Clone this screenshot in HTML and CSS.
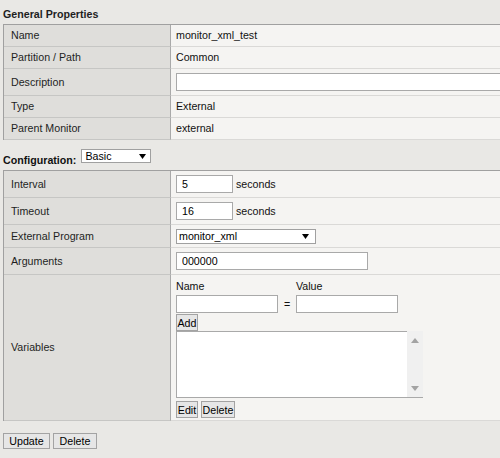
FILE: index.html
```html
<!DOCTYPE html>
<html>
<head>
<meta charset="utf-8">
<link rel="stylesheet" href="styles.css">
</head>
<body>
<div class="page">
  <div class="section-title">General Properties</div>
  <div class="props general">
    <div class="label">Name</div><div class="value">monitor_xml_test</div>
    <div class="label">Partition / Path</div><div class="value">Common</div>
    <div class="label">Description</div><div class="value"><input class="field w-desc" type="text"></div>
    <div class="label">Type</div><div class="value">External</div>
    <div class="label">Parent Monitor</div><div class="value">external</div>
  </div>

  <div class="config-bar">
    <span class="config-label">Configuration:</span>
    <span class="select select-basic"><span>Basic</span><svg class="arrow" width="7" height="5" viewBox="0 0 7 5"><path d="M0 0H7L3.5 5Z" fill="#000"/></svg></span>
  </div>

  <div class="props config">
    <div class="label">Interval</div>
    <div class="value"><input class="field w-num" type="text" value="5"><span class="unit">seconds</span></div>
    <div class="label">Timeout</div>
    <div class="value"><input class="field w-num" type="text" value="16"><span class="unit">seconds</span></div>
    <div class="label">External Program</div>
    <div class="value"><span class="select select-prog"><span>monitor_xml</span><svg class="arrow" width="7" height="5" viewBox="0 0 7 5"><path d="M0 0H7L3.5 5Z" fill="#000"/></svg></span></div>
    <div class="label">Arguments</div>
    <div class="value"><input class="field w-args" type="text" value="000000"></div>
    <div class="label">Variables</div>
    <div class="value vars">
      <div class="var-row">
        <div class="var-field"><div class="var-label">Name</div><input class="field w-var" type="text"></div>
        <span class="eq">=</span>
        <div class="var-field"><div class="var-label">Value</div><input class="field w-var" type="text"></div>
      </div>
      <button class="btn btn-add">Add</button>
      <div class="listbox">
        <div class="list-area"></div>
        <div class="scrollbar">
          <svg width="8" height="5" viewBox="0 0 8 5"><path d="M0 5L4 0L8 5Z" fill="#a3a3a3"/></svg>
          <svg width="8" height="5" viewBox="0 0 8 5"><path d="M0 0H8L4 5Z" fill="#a3a3a3"/></svg>
        </div>
      </div>
      <div class="btn-row">
        <button class="btn btn-edit">Edit</button>
        <button class="btn btn-del-small">Delete</button>
      </div>
    </div>
  </div>

  <div class="actions">
    <button class="btn btn-update">Update</button>
    <button class="btn btn-delete">Delete</button>
  </div>
</div>
</body>
</html>
```

FILE: styles.css
```css
html, body {
  margin: 0;
  padding: 0;
  width: 500px;
  height: 458px;
  overflow: hidden;
  background: #e9e8e5;
}

body {
  font-family: "Liberation Sans", Arial, sans-serif;
  font-size: 8pt;
  line-height: 13px;
  color: #1e1e1e;
}

.page {
  padding-left: 3px;
}

.section-title {
  font-weight: bold;
  box-sizing: border-box;
  height: 24px;
  padding-top: 8px;
}

.props {
  width: 497px;
  display: grid;
  grid-template-columns: 167px minmax(0, 1fr);
  border-top: 1px solid #a0a0a0;
  border-left: 1px solid #a0a0a0;
  box-sizing: border-box;
}

.general {
  grid-template-rows: 22px 22px 27px 22px 22px;
}

.config {
  grid-template-rows: 27px 27px 23px 27px 146px;
}

.label {
  box-sizing: border-box;
  background: #dfdedb;
  border-right: 1px solid #a9a9a9;
  border-bottom: 1px solid #c6c6c4;
  padding-left: 7px;
  display: flex;
  align-items: center;
}

.value {
  box-sizing: border-box;
  background: #f5f4f2;
  border-bottom: 1px solid #dad9d7;
  padding-left: 5px;
  display: flex;
  align-items: center;
  color: #111;
  overflow: hidden;
  min-width: 0;
}

.field {
  box-sizing: border-box;
  flex: none;
  height: 18px;
  border: 1px solid #a9a9a9;
  background: #fff;
  padding: 0 5px;
  margin: 0;
  font-family: "Liberation Sans", Arial, sans-serif;
  font-size: 8pt;
  color: #000;
  outline: none;
}

.w-desc { width: 360px; }
.w-num { width: 57px; }
.w-args { width: 192px; }
.w-var { width: 102px; }

.unit {
  margin-left: 3px;
}

.select {
  box-sizing: border-box;
  display: flex;
  align-items: center;
  justify-content: space-between;
  background: #fff;
  border: 1px solid #a0a0a0;
  color: #000;
}

.select-basic {
  width: 70px;
  height: 14px;
  line-height: 12px;
  margin-top: 9px;
  padding: 0 4px 0 3px;
}

.select-prog {
  width: 140px;
  height: 15px;
  padding: 0 6px 0 2px;
}

.config-bar {
  display: flex;
  align-items: flex-start;
  gap: 5px;
  height: 30px;
}

.config-label {
  font-weight: bold;
  margin-top: 14px;
  color: #111;
}

.vars {
  display: block;
  padding-top: 5px;
}

.var-row {
  display: flex;
  align-items: flex-end;
}

.var-label {
  height: 13px;
  margin-bottom: 2px;
}

.eq {
  width: 18px;
  height: 18px;
  line-height: 18px;
  text-align: center;
}

.btn {
  box-sizing: border-box;
  height: 17px;
  padding: 0;
  margin: 0;
  border: 1px solid #a3a3a3;
  background: #e6e6e6;
  font-family: "Liberation Sans", Arial, sans-serif;
  font-size: 8pt;
  color: #000;
  text-align: center;
  display: block;
}

.btn-add {
  width: 22px;
  margin-top: 1px;
}

.listbox {
  display: flex;
  width: 247px;
  height: 67px;
  box-sizing: border-box;
  border-bottom: 1px solid #a9a9a9;
}

.list-area {
  flex: 1;
  background: #fff;
  border-left: 1px solid #a9a9a9;
  border-top: 1px solid #a9a9a9;
}

.scrollbar {
  width: 16px;
  background: #f0f0f0;
  display: flex;
  flex-direction: column;
  justify-content: space-between;
  align-items: center;
  padding: 7px 0 6px;
  box-sizing: border-box;
}

.btn-row {
  display: flex;
  gap: 3px;
  margin-top: 3px;
}

.btn-edit { width: 22px; }
.btn-del-small { width: 34px; }

.actions {
  display: flex;
  gap: 3px;
  margin-top: 12px;
}

.btn-update { width: 47px; height: 16px; }
.btn-delete { width: 44px; height: 16px; }
```
